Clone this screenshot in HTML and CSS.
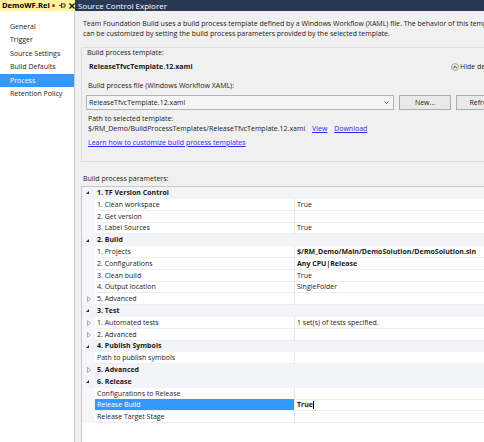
FILE: index.html
```html
<!DOCTYPE html>
<html lang="en">
<head>
    <meta charset="UTF-8">
    <title>DemoWF.Release - Build Definition</title>
    <link rel="stylesheet" href="styles.css">
</head>
<body>
    <div class="tabbar">
        <div class="tab tab-active">
            <span class="tab-title">DemoWF.Rel</span>
            <span class="tab-dirty"></span>
            <svg class="tab-pin" width="7" height="5" viewBox="0 0 7 5">
                <path d="M0 2.5H2M2.5 0V5M2.5 1H6V4H2.5" fill="none" stroke="#333" stroke-width="1"/>
            </svg>
            <svg class="tab-close" width="6" height="6" viewBox="0 0 6 6">
                <path d="M0.5 0.5L5.5 5.5M5.5 0.5L0.5 5.5" stroke="#111" stroke-width="1.4"/>
            </svg>
        </div>
        <div class="tab">Source Control Explorer</div>
    </div>

    <div class="workspace">
        <ul class="nav">
            <li>General</li>
            <li>Trigger</li>
            <li>Source Settings</li>
            <li>Build Defaults</li>
            <li class="selected">Process</li>
            <li>Retention Policy</li>
        </ul>

        <div class="main">
            <div class="main-inner">
                <p class="intro">Team Foundation Build uses a build process template defined by a Windows Workflow (XAML) file. The behavior of this template<br>can be customized by setting the build process parameters provided by the selected template.</p>

                <div class="groupbox">
                    <div class="groupbox-title">Build process template:</div>
                    <div class="template-row">
                        <span class="template-name">ReleaseTfvcTemplate.12.xaml</span>
                        <span class="hide-details">
                            <svg width="8" height="8" viewBox="0 0 8 8">
                                <circle cx="4" cy="4" r="3.5" fill="#e4e4e4" stroke="#9a9a9a" stroke-width="0.8"/>
                                <path d="M2.4 4.9L4 3.3L5.6 4.9" fill="none" stroke="#222" stroke-width="1"/>
                            </svg>
                            Hide details
                        </span>
                    </div>
                    <div class="field-label">Build process file (Windows Workflow XAML):</div>
                    <div class="file-row">
                        <div class="combo">
                            <span>ReleaseTfvcTemplate.12.xaml</span>
                            <svg width="5" height="3" viewBox="0 0 5 3">
                                <path d="M0.5 0.5L2.5 2.5L4.5 0.5" fill="none" stroke="#555" stroke-width="0.9"/>
                            </svg>
                        </div>
                        <button class="btn">New...</button>
                        <button class="btn">Refresh</button>
                    </div>
                    <div class="field-label path-label">Path to selected template:</div>
                    <div class="path">$/RM_Demo/BuildProcessTemplates/ReleaseTfvcTemplate.12.xaml <a href="#">View</a> <a href="#">Download</a></div>
                    <div class="learn"><a href="#">Learn how to customize build process templates</a></div>
                </div>

                <div class="params-label">Build process parameters:</div>

                <div class="grid">
                    <div class="row cat"><span class="gutter"><i class="exp"></i></span><span class="name">1. TF Version Control</span></div>
                    <div class="row"><span class="gutter"></span><span class="name">1. Clean workspace</span><span class="value">True</span></div>
                    <div class="row"><span class="gutter"></span><span class="name">2. Get version</span><span class="value"></span></div>
                    <div class="row"><span class="gutter"></span><span class="name">3. Label Sources</span><span class="value">True</span></div>

                    <div class="row cat"><span class="gutter"><i class="exp"></i></span><span class="name">2. Build</span></div>
                    <div class="row"><span class="gutter"></span><span class="name">1. Projects</span><span class="value bold">$/RM_Demo/Main/DemoSolution/DemoSolution.sln</span></div>
                    <div class="row"><span class="gutter"></span><span class="name">2. Configurations</span><span class="value bold">Any CPU|Release</span></div>
                    <div class="row"><span class="gutter"></span><span class="name">3. Clean build</span><span class="value">True</span></div>
                    <div class="row"><span class="gutter"></span><span class="name">4. Output location</span><span class="value">SingleFolder</span></div>
                    <div class="row"><span class="gutter"><svg class="col" width="4" height="6" viewBox="0 0 4 6"><path d="M0.5 0.5L3.4 3L0.5 5.5Z" fill="none" stroke="#9c9c9c" stroke-width="0.8"/></svg></span><span class="name">5. Advanced</span><span class="value"></span></div>

                    <div class="row cat"><span class="gutter"><i class="exp"></i></span><span class="name">3. Test</span></div>
                    <div class="row"><span class="gutter"><svg class="col" width="4" height="6" viewBox="0 0 4 6"><path d="M0.5 0.5L3.4 3L0.5 5.5Z" fill="none" stroke="#9c9c9c" stroke-width="0.8"/></svg></span><span class="name">1. Automated tests</span><span class="value">1 set(s) of tests specified.</span></div>
                    <div class="row"><span class="gutter"><svg class="col" width="4" height="6" viewBox="0 0 4 6"><path d="M0.5 0.5L3.4 3L0.5 5.5Z" fill="none" stroke="#9c9c9c" stroke-width="0.8"/></svg></span><span class="name">2. Advanced</span><span class="value"></span></div>

                    <div class="row cat"><span class="gutter"><i class="exp"></i></span><span class="name">4. Publish Symbols</span></div>
                    <div class="row"><span class="gutter"></span><span class="name">Path to publish symbols</span><span class="value"></span></div>

                    <div class="row cat"><span class="gutter"><svg class="col" width="4" height="6" viewBox="0 0 4 6"><path d="M0.5 0.5L3.4 3L0.5 5.5Z" fill="none" stroke="#9c9c9c" stroke-width="0.8"/></svg></span><span class="name">5. Advanced</span></div>

                    <div class="row cat"><span class="gutter"><i class="exp"></i></span><span class="name">6. Release</span></div>
                    <div class="row"><span class="gutter"></span><span class="name">Configurations to Release</span><span class="value"></span></div>
                    <div class="row selected"><span class="gutter"></span><span class="name">Release Build</span><span class="value bold">True<span class="caret"></span></span></div>
                    <div class="row"><span class="gutter"></span><span class="name">Release Target Stage</span><span class="value"></span></div>
                </div>
            </div>
        </div>
    </div>
</body>
</html>
```

FILE: styles.css
```css
:root {
    --tabwell: #293955;
    --tab-active: #fff29d;
    --panel: #f0f0f0;
    --text: #1a1a1a;
    --select: #3399ff;
    --link: #2b2bf0;
    --cat: #f2f4f8;
    --gutter: #f5f7fa;
    --line: #eceef2;
}

* {
    margin: 0;
    padding: 0;
    box-sizing: border-box;
}

body {
    width: 484px;
    height: 442px;
    overflow: hidden;
    background: var(--panel);
    color: var(--text);
    font-family: "Open Sans", "Noto Sans", sans-serif;
    font-size: 7px;
}

/* Document tabs */
.tabbar {
    height: 11px;
    background: var(--tabwell);
    display: flex;
    font-size: 8px;
}

.tab {
    color: #fff;
    line-height: 11px;
    padding-left: 3px;
    white-space: nowrap;
}

.tab-active {
    width: 75px;
    flex: none;
    padding-left: 2px;
    background: var(--tab-active);
    color: #000;
    display: flex;
    align-items: center;
}

.tab-title {
    font-weight: bold;
    font-size: 7.6px;
}

.tab-dirty {
    width: 3px;
    height: 3px;
    flex: none;
    border-radius: 50%;
    background: #d9181d;
    margin-left: 2px;
}

.tab-pin {
    flex: none;
    margin-left: 4px;
}

.tab-close {
    flex: none;
    margin-left: 3px;
}

/* Layout */
.workspace {
    display: flex;
    height: 431px;
}

.nav {
    width: 75px;
    flex: none;
    background: #fff;
    border-right: 1px solid #c9cbd1;
    list-style: none;
    padding-top: 8.5px;
}

.nav li {
    height: 13.5px;
    line-height: 13.5px;
    padding-left: 10px;
    white-space: nowrap;
}

.nav li.selected {
    background: var(--select);
    color: #fff;
}

.main {
    flex: 1;
    min-width: 0;
    overflow: hidden;
    padding-left: 6px;
}

.main-inner {
    width: 620px;
}

.intro {
    margin: 8px 0 0 2px;
    line-height: 10px;
    white-space: nowrap;
}

/* Template group */
.groupbox {
    margin-top: 8px;
    height: 115px;
    border: 1px solid #dcdcdc;
    padding-left: 4px;
}

.groupbox-title {
    line-height: 10px;
    margin-left: 1px;
}

.template-row {
    margin-top: 4px;
    line-height: 10px;
    display: flex;
    align-items: center;
}

.template-name {
    font-weight: bold;
    width: 365px;
    padding-left: 3px;
}

.hide-details {
    display: flex;
    align-items: center;
    gap: 1px;
}

.field-label {
    margin-top: 9px;
    line-height: 10px;
    padding-left: 2px;
}

.file-row {
    margin-top: 4px;
    height: 15px;
    display: flex;
    gap: 5px;
}

.combo {
    width: 308px;
    border: 1px solid #b4b4b4;
    background: #f5f5f5;
    display: flex;
    align-items: center;
    justify-content: space-between;
    padding: 0 4px 0 2px;
}

.btn {
    width: 52px;
    border: 1px solid #acacac;
    background: #e9e9e9;
    font: inherit;
    color: var(--text);
}

.path-label {
    margin-top: 4px;
}

.path {
    line-height: 10.5px;
    padding-left: 2px;
    white-space: nowrap;
}

.path a {
    margin-left: 5px;
}

.learn {
    margin-top: 3px;
    line-height: 10px;
    padding-left: 2px;
}

a {
    color: var(--link);
}

/* Parameters grid */
.params-label {
    margin: 12px 0 0 2px;
    line-height: 10px;
}

.grid {
    margin-top: 2px;
    height: 260px;
    background: #fff;
    border-top: 1px solid #c8c8c8;
    border-left: 1px solid #c8c8c8;
}

.row {
    display: grid;
    grid-template-columns: 13px 199px 1fr;
    height: 11.8px;
    line-height: 11px;
    white-space: nowrap;
}

.gutter {
    background: var(--gutter);
    display: flex;
    align-items: center;
    padding-left: 4px;
}

.name {
    padding-left: 2px;
    border-bottom: 0.8px solid var(--line);
}

.value {
    padding-left: 2px;
    border-left: 1px solid #e6e6e6;
    border-bottom: 0.8px solid var(--line);
}

.bold {
    font-weight: bold;
}

.row.cat {
    background: var(--cat);
}

.row.cat .gutter {
    background: var(--cat);
}

.row.cat .name {
    grid-column: 2 / -1;
    font-weight: bold;
    border-bottom: none;
}

.row.selected .name {
    background: var(--select);
    color: #fff;
}

.caret {
    display: inline-block;
    width: 1px;
    height: 8px;
    background: #000;
    vertical-align: middle;
    margin-left: 0.5px;
}

.exp {
    width: 0;
    height: 0;
    border-style: solid;
    border-width: 0 0 3.5px 3.5px;
    border-color: transparent transparent #262626 transparent;
}

.col {
    margin-left: 1px;
}
```
